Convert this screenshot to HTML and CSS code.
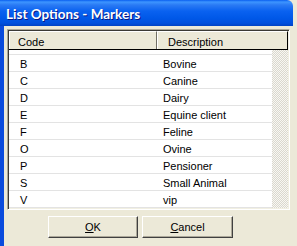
FILE: index.html
```html
<!DOCTYPE html>
<html>
<head>
<meta charset="utf-8">
<link rel="stylesheet" href="styles.css">
</head>
<body>
<div class="window">
  <div class="titlebar"><span class="title">List Options - Markers</span></div>
  <div class="client">
    <div class="listbox">
      <div class="header">
        <div class="hcell code-col">Code</div>
        <div class="hcell desc-col">Description</div>
      </div>
      <div class="body">
        <div class="rows">
          <div class="row"><span class="c">B</span><span class="d">Bovine</span></div>
          <div class="row"><span class="c">C</span><span class="d">Canine</span></div>
          <div class="row"><span class="c">D</span><span class="d">Dairy</span></div>
          <div class="row"><span class="c">E</span><span class="d">Equine client</span></div>
          <div class="row"><span class="c">F</span><span class="d">Feline</span></div>
          <div class="row"><span class="c">O</span><span class="d">Ovine</span></div>
          <div class="row"><span class="c">P</span><span class="d">Pensioner</span></div>
          <div class="row"><span class="c">S</span><span class="d">Small Animal</span></div>
          <div class="row"><span class="c">V</span><span class="d">vip</span></div>
        </div>
        <div class="hatch"></div>
      </div>
    </div>
    <div class="buttons">
      <button class="btn ok"><u>O</u>K</button>
      <button class="btn cancel"><u>C</u>ancel</button>
    </div>
  </div>
</div>
</body>
</html>
```
FILE: styles.css
```css
html, body {
  margin: 0;
  padding: 0;
  background: #ECE9D8;
  font-family: "Liberation Sans", Arial, sans-serif;
  font-size: 11px;
  color: #000;
}
.window {
  width: 297px;
  height: 246px;
  overflow: hidden;
}
.titlebar {
  width: 293px;
  height: 26px;
  box-sizing: border-box;
  padding: 6px 0 0 6px;
  background: linear-gradient(#0A5FF0 0, #3D95FF 2px, #2A7AF4 5px, #0A62F0 11px, #0058E8 18px, #0050DE 23px, #0042C4 26px);
  border-top-right-radius: 6px;
  line-height: 16px;
}
.title {
  color: #fff;
  font-family: "Lato", "Liberation Sans", sans-serif;
  font-weight: bold;
  font-size: 13.5px;
  text-shadow: 1px 1px #0A1883;
}
.client {
  border-left: 4px solid #0A4BDD;
  height: 220px;
  padding: 3px 0 0 3px;
  box-sizing: border-box;
}
.listbox {
  width: 283px;
  height: 181px;
  box-sizing: border-box;
  border-top: 1px solid #ACA899;
  border-left: 1px solid #ACA899;
  border-right: 1px solid #fff;
  border-bottom: 1px solid #fff;
  box-shadow: inset 1px 1px 0 #3b3a35, inset -1px -1px 0 #F1EFE2;
  padding: 1px;
  background: #fff;
  display: flex;
  flex-direction: column;
}
.header {
  display: flex;
  height: 19px;
  flex: none;
  background: #ECE9D8;
  border-bottom: 1px solid #000;
  box-sizing: border-box;
}
.hcell {
  box-sizing: border-box;
  height: 18px;
  line-height: 17px;
  padding-top: 2px;
  border-top: 1px solid #fff;
  border-left: 1px solid #fff;
  border-right: 1px solid #716F64;
}
.code-col {
  width: 148px;
  padding-left: 8px;
}
.desc-col {
  flex: 1;
  padding-left: 10px;
  border-right: 1px solid #000;
}
.body {
  flex: 1;
  display: flex;
}
.rows {
  flex: 1;
  padding-top: 4px;
}
.row {
  display: flex;
  height: 17px;
  box-sizing: border-box;
  border-bottom: 1px solid #E3E3E3;
  line-height: 18px;
}
.row:first-child {
  border-top: 1px solid #E3E3E3;
  height: 18px;
}
.c {
  width: 148px;
  padding-left: 11px;
  box-sizing: border-box;
}
.d {
  padding-left: 6px;
}
.hatch {
  width: 16px;
  background-color: #F4F3EE;
  background-image: repeating-conic-gradient(#DAD8CE 0 25%, #F8F7F3 0 50%);
  background-size: 2px 2px;
}
.buttons {
  display: flex;
  gap: 4px;
  padding: 6px 0 0 41px;
}
.btn {
  font-family: "Liberation Sans", Arial, sans-serif;
  font-size: 11px;
  height: 22px;
  background: #ECE9D8;
  border: none;
  border-top: 1px solid #fff;
  border-left: 1px solid #fff;
  border-right: 1px solid #404040;
  border-bottom: 1px solid #404040;
  box-shadow: inset -1px -1px 0 #ACA899;
  padding: 0;
  color: #000;
}
.ok { width: 90px; }
.cancel { width: 91px; }
```
